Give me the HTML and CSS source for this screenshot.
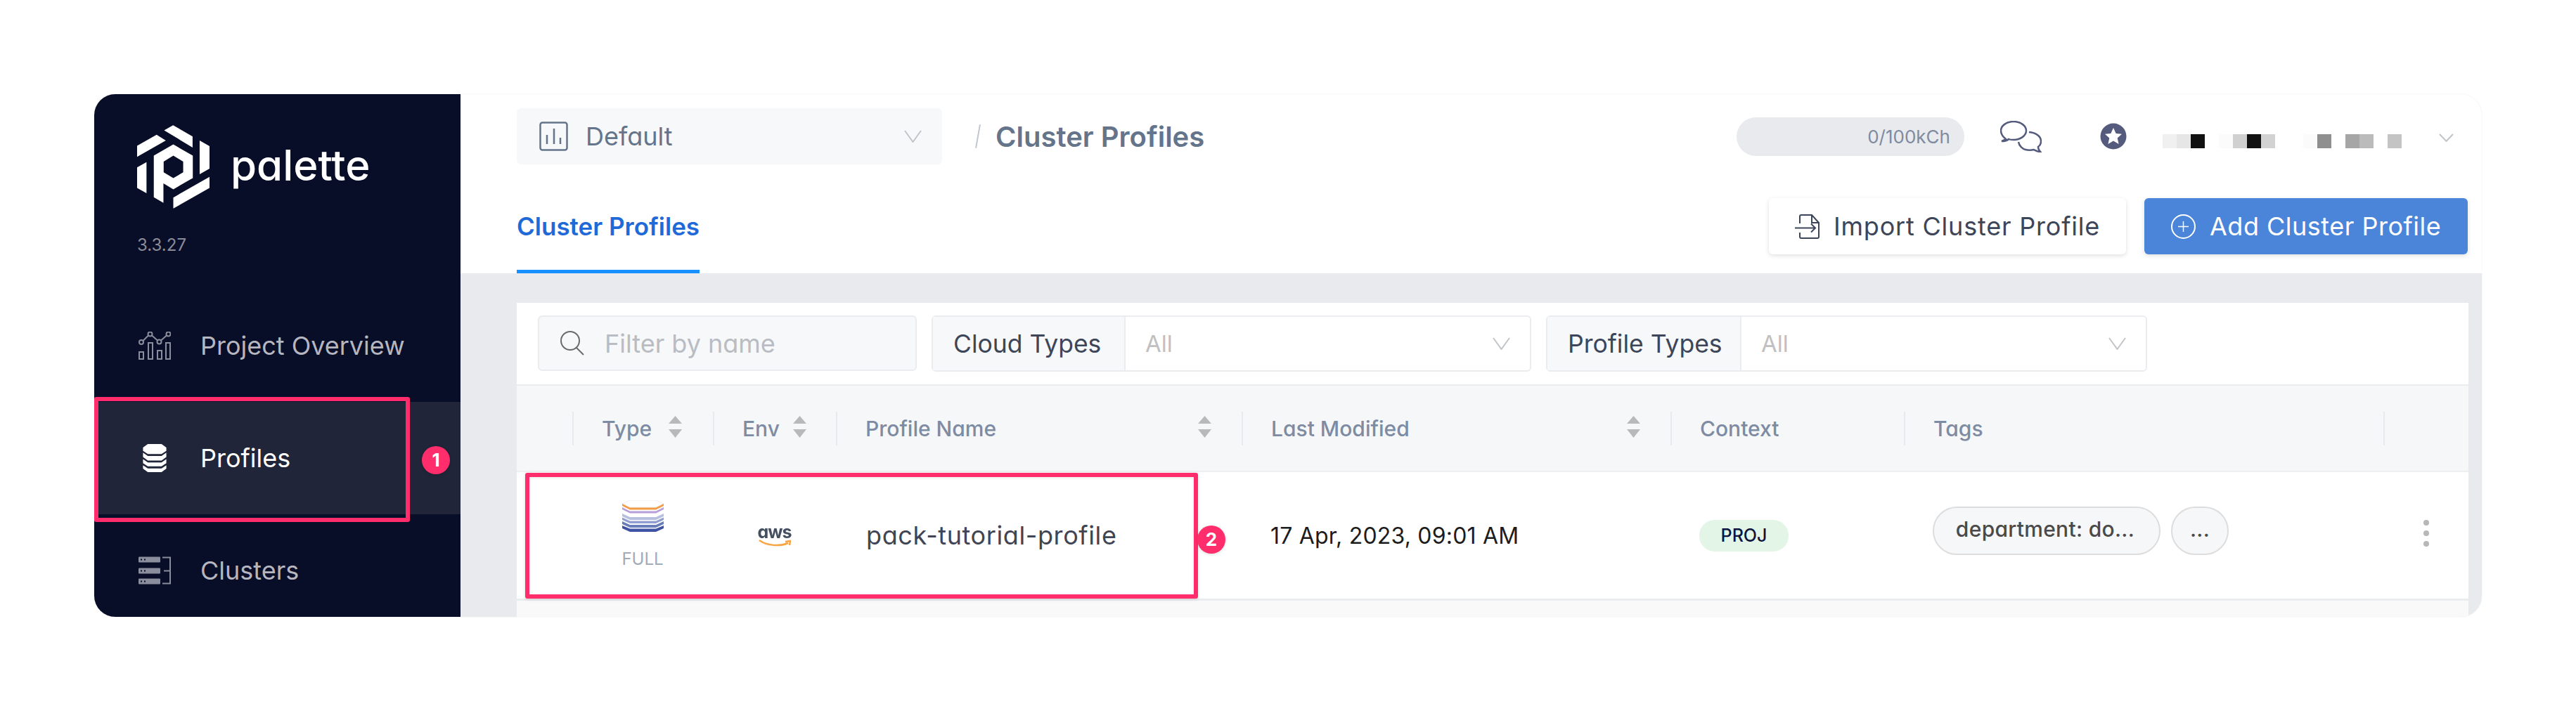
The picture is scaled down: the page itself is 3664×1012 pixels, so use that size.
FILE: index.html
```html
<!DOCTYPE html>
<html lang="en">
<head>
  <meta charset="UTF-8" />
  <title>Palette - Cluster Profiles</title>
  <link rel="stylesheet" href="styles.css">
</head>
<body>
  <div class="frame">
    <!-- Sidebar -->
    <aside class="sidebar">
      <div class="brand">
        <svg class="brand-logo" viewBox="75 25 308 355">
          <path fill="#fff" d="M190 47L228 25L311 73V120Z M75 113L158 66L197 90L75 160Z M75 205L115 182V315L75 292Z M341 90L383 114V210L341 234Z M383 245V292L229 380V333Z"/>
          <path fill="#fff" fill-rule="evenodd" d="M229 107L312 155V250L229 298L187 273V356L146 332V155Z M229 155L188 180V226L229 250L271 226V180Z"/>
        </svg>
        <span class="brand-name">palette</span>
      </div>
      <div class="version">3.3.27</div>
      <nav class="nav">
        <a class="nav-item">
          <svg class="nav-icon" viewBox="0 0 46 40" fill="none" stroke="#8a8d9b" stroke-width="2">
            <rect x="1" y="29" width="6" height="10"/><rect x="14" y="16" width="6" height="23"/><rect x="27" y="27" width="6" height="12"/><rect x="39" y="16" width="6" height="23"/>
            <circle cx="4" cy="15" r="3"/><circle cx="16.5" cy="3.5" r="3"/><circle cx="29.5" cy="14.500" r="3"/><circle cx="42.500" cy="3.500" r="3"/>
            <path d="M6.500 13L14 5.500M19 5.500L27 12.500M32 12.500L40 5.500"/>
          </svg>
          <span>Project Overview</span>
        </a>
        <a class="nav-item active">
          <svg class="nav-icon" viewBox="0 0 46 41" fill="#fff">
            <path d="M13 0H33L40 5V10L33 14.500H13L6 10V5Z"/>
            <path d="M6 12.500L13 17.500H33L40 12.500V19L33 24H13L6 19Z"/>
            <path d="M6 22L13 27H33L40 22V28L33 32.500H13L6 28Z"/>
            <path d="M6 31L13 35.500H33L40 31V36L33 41H13L6 36Z"/>
          </svg>
          <span>Profiles</span>
          <div class="mark mark-nav"></div>
          <div class="badge badge-nav">1</div>
        </a>
        <a class="nav-item">
          <svg class="nav-icon" viewBox="0 0 46 39">
            <rect width="31" height="8" rx="1" fill="#8a8d9b"/><rect y="16" width="31" height="8" rx="1" fill="#8a8d9b"/><rect y="31" width="31" height="8" rx="1" fill="#8a8d9b"/>
            <path d="M34 1H45V38H34M36 20H45" fill="none" stroke="#8a8d9b" stroke-width="2"/>
            <path d="M3 4H5M8 4H10M3 20H5M8 20H10M3 35H5M8 35H10" stroke="#080d28" stroke-width="2"/>
          </svg>
          <span>Clusters</span>
        </a>
      </nav>
    </aside>

    <!-- Main Content -->
    <main class="main">
      <header class="head">
        <div class="top-row">
          <div class="scope-select">
            <svg class="scope-icon" viewBox="0 0 41 42" fill="none" stroke="#64748b" stroke-width="2.500">
              <rect x="1.500" y="1.500" width="38" height="39" rx="3"/>
              <path d="M11 32V19M21 32V10M30 32V23"/>
            </svg>
            <span>Default</span>
            <svg class="chevron scope-chevron" viewBox="0 0 25 18"><path d="M1 1L12.500 17L24 1"/></svg>
          </div>
          <span class="slash"></span>
          <h1 class="page-title">Cluster Profiles</h1>
          <div class="usage">0/100kCh</div>
          <svg class="chat-icon" viewBox="0 0 59 45" fill="none" stroke="#555b7c" stroke-width="2.500">
            <path d="M8 26C3 22 1 18 1 14C1 7 9 1 19 1C29 1 37 7 37 14C37 21 29 27 19 27C16 27 14 27 12 26C10 28 6 29 2 29C5 28 7 27 8 26Z"/>
            <path d="M41 16C51 17 58 22 58 29C58 32 57 35 54 37C54 40 55 42 57 44C53 44 50 42 48 41C44 42 40 42 36 41C32 40 27 36 26 30"/>
          </svg>
          <svg class="star-icon" viewBox="0 0 38 38">
            <circle cx="19" cy="19" r="18.500" fill="#555b7c"/>
            <path fill="#fff" d="M19 7L22.700 15L31 15.800L24.700 21.400L26.600 30L19 25.500L11.400 30L13.300 21.400L7 15.800L15.300 15Z"/>
          </svg>
          <div class="user-blur">
            <i class="p1"></i><i class="p2"></i><i class="p3"></i><i></i>
            <i class="p4"></i><i class="p5"></i><i class="p3"></i><i class="p6"></i><i></i><i></i>
            <i class="p4"></i><i class="p7"></i><i></i>
            <i class="p8"></i><i class="p9"></i><i></i><i class="p10"></i>
          </div>
          <svg class="chevron user-chevron" viewBox="0 0 21 12"><path d="M1 1L10.500 11L20 1"/></svg>
        </div>

        <div class="tab-row">
          <a class="tab">Cluster Profiles</a>
          <div class="actions">
            <button class="btn btn-light">
              <svg class="btn-icon" viewBox="0 0 35 35" fill="none" stroke="#3d4658" stroke-width="2">
                <path d="M7 13V3C7 2 8 1 9 1H24L34 12V32C34 33 33 34 32 34H9C8 34 7 33 7 32V26"/>
                <path d="M24 1V12H34M0 19.500H29M23 13.500L29 19.500L23 25.500"/>
              </svg>
              Import Cluster Profile
            </button>
            <button class="btn btn-primary">
              <svg class="btn-icon" viewBox="0 0 35 35" fill="none" stroke="#fff" stroke-width="2">
                <circle cx="17.500" cy="17.500" r="16.500"/>
                <path d="M17.500 10V25M10 17.500H25" stroke-width="1.500"/>
              </svg>
              Add Cluster Profile
            </button>
          </div>
        </div>
      </header>

      <section class="content">
        <div class="panel">
          <div class="filters">
            <div class="search">
              <svg class="search-icon" viewBox="0 0 35 35" fill="none" stroke="#6b6b6b" stroke-width="2">
                <circle cx="15" cy="14" r="13"/><path d="M24 24L34 34"/>
              </svg>
              <span>Filter by name</span>
            </div>
            <div class="filter cloud">
              <div class="filter-label">Cloud Types</div>
              <div class="filter-value">
                <span>All</span>
                <svg class="chevron filter-chevron" viewBox="0 0 25 18"><path d="M1 1L12.500 17L24 1"/></svg>
              </div>
            </div>
            <div class="filter types">
              <div class="filter-label">Profile Types</div>
              <div class="filter-value">
                <span>All</span>
                <svg class="chevron filter-chevron" viewBox="0 0 25 18"><path d="M1 1L12.500 17L24 1"/></svg>
              </div>
            </div>
          </div>

          <div class="table-head">
            <div class="th th-first"></div>
            <div class="th"><span>Type</span><svg class="sort" viewBox="0 0 19 31"><path d="M9.500 0L19 11H0Z M0 19H19L9.500 31Z"/></svg></div>
            <div class="th th-env"><span>Env</span><svg class="sort" viewBox="0 0 19 31"><path d="M9.500 0L19 11H0Z M0 19H19L9.500 31Z"/></svg></div>
            <div class="th th-wide"><span>Profile Name</span><svg class="sort" viewBox="0 0 19 31"><path d="M9.500 0L19 11H0Z M0 19H19L9.500 31Z"/></svg></div>
            <div class="th th-wide"><span>Last Modified</span><svg class="sort" viewBox="0 0 19 31"><path d="M9.500 0L19 11H0Z M0 19H19L9.500 31Z"/></svg></div>
            <div class="th"><span>Context</span></div>
            <div class="th"><span>Tags</span></div>
            <div class="th"></div>
          </div>

          <div class="table-row">
            <div class="td"></div>
            <div class="td td-type">
              <svg class="stack-icon" viewBox="0 0 59 45">
                <path d="M0 5L11 0H48L59 5L48 10H11Z" fill="#fff" stroke="#eceef3" stroke-width="1"/>
                <path fill="#f39a45" d="M0 5L11 10.500H48L59 5V8L48 13.500H11L0 8Z"/>
                <path fill="#b59ed9" d="M0 10L11 15.500H48L59 10V13L48 18.500H11L0 13Z"/>
                <path fill="#b7c0df" d="M0 19L11 24H48L59 19V23L48 28H11L0 23Z"/>
                <path fill="#909fcf" d="M0 24.500L11 29.500H48L59 24.500V28L48 33H11L0 28Z"/>
                <path fill="#6a7dbb" d="M0 30L11 35H48L59 30V34L48 39H11L0 34Z"/>
                <path fill="#3f53a5" d="M0 36L11 40.500H48L59 36V40L48 45H11L0 40Z"/>
              </svg>
              <span class="type-label">FULL</span>
            </div>
            <div class="td td-env">
              <span class="aws-text">aws</span>
              <svg class="aws-smile" viewBox="0 0 46 10" fill="none" stroke="#f7a545" stroke-width="2.500">
                <path d="M1 1C12 9 30 10 42 5M38 3L45 2L44 8"/>
              </svg>
            </div>
            <div class="td td-name">pack-tutorial-profile</div>
            <div class="td td-date">17 Apr, 2023, 09:01 AM</div>
            <div class="td td-context"><span class="context-pill">PROJ</span></div>
            <div class="td td-tags">
              <span class="tag tag-main">department: do...</span>
              <span class="tag tag-more">...</span>
            </div>
            <div class="td td-menu"><i></i><i></i><i></i></div>
            <div class="mark mark-row"></div>
            <div class="badge badge-row">2</div>
          </div>
        </div>
      </section>
    </main>
  </div>
</body>
</html>
```

FILE: styles.css
```css
/* Reset & Base */
* {
  margin: 0;
  padding: 0;
  box-sizing: border-box;
}

body {
  font-family: Inter, "Open Sans", sans-serif;
  font-feature-settings: "cv11";
  background-color: #fff;
  width: 3664px;
  height: 1012px;
  overflow: hidden;
  padding: 134px 134px 0;
}

svg {
  display: block;
  flex: none;
}

/* Screenshot Frame */
.frame {
  display: flex;
  width: 3396px;
  height: 744px;
  border-radius: 30px;
  overflow: hidden;
  box-shadow: 0 0 1px rgba(0, 0, 0, 0.25);
}

/* Sidebar */
.sidebar {
  width: 521px;
  flex: none;
  background-color: #080d28;
}

.brand {
  display: flex;
  align-items: center;
  gap: 30px;
  padding: 44px 0 0 61px;
}

.brand-logo {
  width: 103px;
  height: 119px;
}

.brand-name {
  color: #fff;
  font-size: 60px;
  font-weight: 500;
  margin-top: -6px;
}

.version {
  color: #8a8c98;
  font-size: 24px;
  line-height: 30px;
  margin: 37px 0 0 61px;
}

.nav {
  margin-top: 48px;
}

.nav-item {
  position: relative;
  display: flex;
  align-items: center;
  gap: 42px;
  height: 160px;
  padding-left: 63px;
  color: #b5b6bf;
  font-size: 36px;
}

.nav-item.active {
  background-color: #212539;
  color: #fff;
}

.nav-icon {
  width: 46px;
  height: 40px;
}

/* Annotation Marks */
.mark {
  position: absolute;
  border: 6px solid #ff2d6b;
  border-radius: 3px;
}

.mark-nav {
  left: 0;
  top: -7px;
  width: 449px;
  height: 178px;
}

.mark-row {
  left: 12px;
  top: 1px;
  width: 957px;
  height: 179px;
  box-shadow: 0 1px 4px rgba(0, 0, 0, 0.15), inset 0 1px 4px rgba(0, 0, 0, 0.1);
}

.badge {
  position: absolute;
  width: 40px;
  height: 40px;
  line-height: 40px;
  border-radius: 50%;
  background-color: #ff2d6b;
  color: #fff;
  font-size: 26px;
  font-weight: 700;
  text-align: center;
  box-shadow: 0 1px 4px rgba(0, 0, 0, 0.15);
}

.badge-nav {
  left: 466px;
  top: 63px;
}

.badge-row {
  left: 968px;
  top: 76px;
}

/* Main Content */
.main {
  flex: 1;
  display: flex;
  flex-direction: column;
  background-color: #fff;
}

.head {
  padding: 20px 20px 0 80px;
}

.top-row {
  display: flex;
  align-items: center;
  height: 80px;
  padding-right: 20px;
}

.scope-select {
  display: flex;
  align-items: center;
  width: 605px;
  height: 80px;
  padding: 0 29px 0 32px;
  background-color: #f7f8fa;
  border-radius: 6px;
  color: #64748b;
  font-size: 36px;
}

.scope-icon {
  width: 41px;
  height: 42px;
  margin-right: 25px;
}

.scope-chevron {
  width: 25px;
  height: 18px;
  margin-left: auto;
}

.chevron {
  fill: none;
  stroke: #c2c4c8;
  stroke-width: 2;
}

.slash {
  width: 2px;
  height: 34px;
  margin: 0 24px 0 50px;
  background-color: #c2c7d0;
  transform: rotate(10deg);
}

.page-title {
  color: #64748b;
  font-size: 40px;
  font-weight: 600;
}

.usage {
  width: 324px;
  height: 55px;
  margin-left: auto;
  padding-right: 20px;
  border-radius: 28px;
  background-color: #e9eaee;
  color: #7f8ba0;
  font-size: 26px;
  line-height: 55px;
  text-align: right;
}

.chat-icon {
  width: 59px;
  height: 45px;
  margin-left: 51px;
}

.star-icon {
  width: 38px;
  height: 38px;
  margin-left: 83px;
}

.user-blur {
  display: flex;
  margin: 14px 0 0 51px;
}

.user-blur i {
  width: 20px;
  height: 20px;
}

.p1 { background-color: #f0f0f0; }
.p2 { background-color: #e6e6e6; }
.p3 { background-color: #111; }
.p4 { background-color: #fbfbfb; }
.p5 { background-color: #d0d0d0; }
.p6 { background-color: #d2d2d2; }
.p7 { background-color: #8f8f8f; }
.p8 { background-color: #a6a6a6; }
.p9 { background-color: #bbb; }
.p10 { background-color: #c4c4c4; }

.user-chevron {
  width: 21px;
  height: 12px;
  margin: 4px 0 0 53px;
}

.tab-row {
  display: flex;
  justify-content: space-between;
  height: 107px;
  margin-top: 48px;
}

.tab {
  width: 260px;
  height: 107px;
  line-height: 80px;
  border-bottom: 5px solid #1890ff;
  color: #1f6ad8;
  font-size: 35px;
  font-weight: 600;
  white-space: nowrap;
}

.actions {
  display: flex;
  gap: 26px;
}

.btn {
  display: flex;
  align-items: center;
  gap: 20px;
  height: 80px;
  border: none;
  border-radius: 6px;
  font-family: inherit;
  font-feature-settings: inherit;
  font-size: 36px;
  white-space: nowrap;
}

.btn-light {
  width: 508px;
  padding-left: 37px;
  background-color: #fff;
  color: #3d4658;
  letter-spacing: 0.8px;
  box-shadow: 0 2px 6px rgba(0, 0, 0, 0.13);
}

.btn-primary {
  width: 460px;
  padding-left: 38px;
  background-color: #4b85da;
  color: #fff;
  letter-spacing: 0.5px;
  box-shadow: 0 2px 6px rgba(0, 0, 0, 0.13);
}

.btn-icon {
  width: 35px;
  height: 35px;
}

/* Table Panel */
.content {
  flex: 1;
  min-height: 0;
  padding: 42px 19px 0 80px;
  background-color: #e9eaee;
}

.panel {
  height: 100%;
  background-color: #f9f9fa;
  overflow: hidden;
}

.filters {
  display: flex;
  gap: 21px;
  height: 116px;
  padding: 18px 30px;
  background-color: #fff;
}

.search {
  display: flex;
  align-items: center;
  gap: 29px;
  width: 539px;
  height: 79px;
  padding-left: 29px;
  border: 2px solid #ebecef;
  border-radius: 6px;
  background-color: #f7f8fa;
  color: #b9bcc2;
  font-size: 36px;
}

.search-icon {
  width: 35px;
  height: 35px;
}

.filter {
  display: flex;
  height: 80px;
  border: 2px solid #ebecef;
  border-radius: 6px;
  background-color: #fff;
  font-size: 35.5px;
}

.cloud {
  width: 853px;
}

.types {
  width: 855px;
}

.filter-label {
  display: flex;
  align-items: center;
  padding: 0 29px;
  background-color: #f7f8fa;
  border-right: 2px solid #ebecef;
  color: #3d4658;
  white-space: nowrap;
}

.cloud .filter-label {
  width: 274px;
}

.types .filter-label {
  width: 276px;
}

.filter-value {
  flex: 1;
  display: flex;
  align-items: center;
  justify-content: space-between;
  padding: 0 28px;
  color: #c0c0c0;
  font-size: 33px;
}

.filter-chevron {
  width: 25px;
  height: 18px;
}

.table-head,
.table-row {
  display: grid;
  grid-template-columns: 79px 200px 175px 577px 610px 332px 682px 121px;
  background-color: #fff;
}

.table-head {
  align-items: center;
  height: 125px;
  border-top: 2px solid #ebecef;
  border-bottom: 2px solid #efeff2;
  background-color: #f6f7f9;
}

.th {
  display: flex;
  align-items: center;
  gap: 24px;
  height: 48px;
  padding-left: 40px;
  border-left: 2px solid #e9eaee;
  color: #7d8ba3;
  font-size: 30px;
  font-weight: 500;
}

.th-first {
  border-left: none;
}

.th-env {
  gap: 19px;
}

.th-wide {
  justify-content: space-between;
  padding-right: 43px;
}

.sort {
  width: 19px;
  height: 31px;
  fill: #b9b9b9;
  margin-top: -4px;
}

.table-row {
  position: relative;
  height: 183px;
  border-bottom: 3px solid #ebecef;
  color: #3f4554;
}

.td {
  display: flex;
  align-items: center;
}

.td-type {
  flex-direction: column;
  padding-top: 40px;
}

.stack-icon {
  width: 59px;
  height: 45px;
}

.type-label {
  margin-top: 25px;
  color: #a0aab9;
  font-size: 24px;
  line-height: 28px;
}

.td-env {
  flex-direction: column;
  justify-content: center;
}

.aws-text {
  color: #444f60;
  font-size: 25px;
  font-weight: 700;
  line-height: 20px;
  letter-spacing: -1px;
  filter: blur(0.6px);
}

.aws-smile {
  width: 46px;
  height: 10px;
  margin-top: 1px;
}

.td-name {
  padding-left: 43px;
  font-size: 36px;
  letter-spacing: 0.6px;
}

.td-date {
  padding-left: 41px;
  color: #1c1c1c;
  font-size: 32px;
  letter-spacing: 0.2px;
}

.td-context {
  padding-left: 41px;
}

.context-pill {
  width: 127px;
  height: 45px;
  border-radius: 22px;
  background-color: #e2f5e7;
  color: #0d1440;
  font-size: 25px;
  font-weight: 500;
  line-height: 45px;
  text-align: center;
}

.td-tags {
  gap: 15px;
  padding: 0 0 14px 41px;
}

.tag {
  height: 69px;
  border: 2px solid #ddd;
  border-radius: 35px;
  background-color: #f6f7f9;
  color: #4a4a4a;
  font-size: 30px;
  font-weight: 500;
  line-height: 60px;
  letter-spacing: 0.3px;
  text-align: center;
  white-space: nowrap;
}

.tag-main {
  width: 324px;
  padding-right: 4px;
}

.tag-more {
  width: 82px;
}

.td-menu {
  flex-direction: column;
  gap: 7px;
  padding: 0 0 6px 57px;
  align-items: flex-start;
  justify-content: center;
}

.td-menu i {
  width: 8px;
  height: 8px;
  border-radius: 50%;
  background-color: #b7b7b7;
}
```
